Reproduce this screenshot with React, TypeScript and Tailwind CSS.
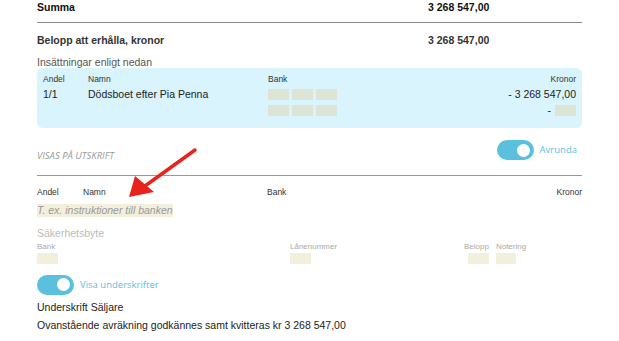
import React from "react";

const sans = "font-['Liberation_Sans',Arial,sans-serif]";
const open = "font-['Open_Sans',sans-serif]";

function Toggle({ label }: { label: string }) {
  return (
    <div className="flex items-center gap-[6px]">
      <div className="flex h-5 w-[37px] items-center justify-end rounded-full bg-[#5bc0de] pr-[4px]">
        <div className="h-[13px] w-[13px] rounded-full bg-white" />
      </div>
      <span className={`${open} text-[9.5px] text-[#5bc0de]`}>{label}</span>
    </div>
  );
}

function Cell({ tone }: { tone: "green" | "beige" }) {
  return (
    <div
      className={
        tone === "green"
          ? "h-[11px] w-[21px] bg-[#dce4d6]"
          : "h-[11px] w-[21px] bg-[#f3efdd]"
      }
    />
  );
}

function Arrow() {
  return (
    <svg className="pointer-events-none absolute left-0 top-0" width="619" height="341">
      <line x1="195" y1="150" x2="145" y2="186" stroke="#e8231e" strokeWidth="3.5" strokeLinecap="round" />
      <polygon points="129,197 135,176 154,192" fill="#e8231e" />
    </svg>
  );
}

export default function App() {
  return (
    <div className={`${sans} relative h-[341px] w-[619px] overflow-hidden bg-white text-[10.5px] text-[#222]`}>
      <div className="ml-[37px] w-[545px]">
        {/* totals */}
        <div className="flex h-[14px] items-center font-bold leading-[14px] text-[#111]">
          <span className="w-[391px]">Summa</span>
          <span>3 268 547,00</span>
        </div>
        <div className="mt-[8px] border-t border-[#8a8a8a]" />
        <div className="mt-[10px] flex font-bold leading-[14px] text-[#333]">
          <span className="w-[391px]">Belopp att erhålla, kronor</span>
          <span>3 268 547,00</span>
        </div>
        <div className="mt-[9px] leading-[12px] text-[#555]">Insättningar enligt nedan</div>

        {/* deposit box */}
        <div className="rounded-[6px] bg-[#d9f4fc] px-[6px] pb-[12px] pt-[6px]">
          <div className="grid grid-cols-[45px_180px_1fr_auto] text-[8.5px] leading-[10px] text-[#333]">
            <span>Andel</span>
            <span>Namn</span>
            <span>Bank</span>
            <span className="text-right">Kronor</span>
          </div>
          <div className="mt-[5px] grid grid-cols-[45px_180px_1fr_auto] items-center leading-[11px]">
            <span>1/1</span>
            <span>Dödsboet efter Pia Penna</span>
            <div className="flex gap-[3px]">
              <Cell tone="green" />
              <Cell tone="green" />
              <Cell tone="green" />
            </div>
            <span className="text-right">- 3 268 547,00</span>
          </div>
          <div className="mt-[5px] grid grid-cols-[45px_180px_1fr_auto] items-center leading-[11px]">
            <span />
            <span />
            <div className="flex gap-[3px]">
              <Cell tone="green" />
              <Cell tone="green" />
              <Cell tone="green" />
            </div>
            <div className="flex items-center justify-end gap-[4px]">
              <span>-</span>
              <Cell tone="green" />
            </div>
          </div>
        </div>

        {/* print section */}
        <div className="mt-[11px] flex justify-between pr-[5px]">
          <span className={`${open} mt-[12px] self-start text-[9.5px] uppercase italic leading-[10px] text-[#999]`}>
            Visas på utskrift
          </span>
          <Toggle label="Avrunda" />
        </div>
        <div className="mt-[14px] border-t border-[#999]" />
        <div className="mt-[11px] grid grid-cols-[46px_184px_1fr_auto] text-[8.5px] leading-[10px] text-[#333]">
          <span>Andel</span>
          <span>Namn</span>
          <span>Bank</span>
          <span className="text-right">Kronor</span>
        </div>
        <div className="mt-[6px]">
          <span className="inline-block bg-[#f3efdd] italic leading-[13px] text-[#999]">
            T. ex. instruktioner till banken
          </span>
        </div>

        <div className="mt-[7px] leading-[14px] text-[#bbb]">Säkerhetsbyte</div>
        <div className="mt-[2px] flex text-[8px] leading-[10px] text-[#aaa]">
          <div className="w-[253px]">
            <div>Bank</div>
            <div className="mt-[1px]"><Cell tone="beige" /></div>
          </div>
          <div className="w-[174px]">
            <div>Lånenummer</div>
            <div className="mt-[1px]"><Cell tone="beige" /></div>
          </div>
          <div className="flex flex-col items-end">
            <div>Belopp</div>
            <div className="mt-[1px]"><Cell tone="beige" /></div>
          </div>
          <div className="ml-[7px]">
            <div>Notering</div>
            <div className="mt-[1px] h-[11px] w-[20px] bg-[#f3efdd]" />
          </div>
        </div>

        <div className="mt-[11px]">
          <Toggle label="Visa underskrifter" />
        </div>
        <div className="mt-[5px] leading-[14px]">Underskrift Säljare</div>
        <div className="mt-[4px] leading-[14px]">Ovanstående avräkning godkännes samt kvitteras kr 3 268 547,00</div>
      </div>
      <Arrow />
    </div>
  );
}
